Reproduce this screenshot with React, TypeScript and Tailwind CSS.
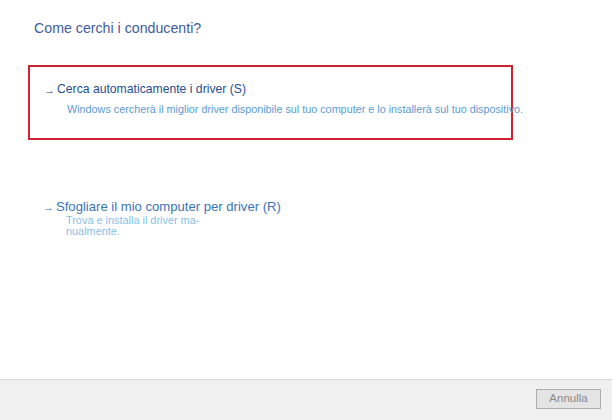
import React from "react";

const font = { fontFamily: '"Liberation Sans", Arial, sans-serif' };

function Option({
	title,
	desc,
	titleClass,
	descClass,
	arrowColor,
}: {
	title: string;
	desc: React.ReactNode;
	titleClass: string;
	descClass: string;
	arrowColor: string;
}) {
	return (
		<div className="flex flex-col">
			<div className="flex items-end">
				<span className={`w-[13px] text-[11px] leading-[13px] ${arrowColor}`}>→</span>
				<span className={`leading-[15px] ${titleClass}`}>{title}</span>
			</div>
			<div className={`pl-[23px] whitespace-nowrap ${descClass}`}>{desc}</div>
		</div>
	);
}

export default function App() {
	return (
		<div className="w-[612px] h-[420px] flex flex-col bg-white" style={font}>
			<div className="flex-1 flex flex-col">
				<div className="pt-[20px] pl-[34px] text-[14.2px] leading-[16px] text-[#3f5c9e]">
					Come cerchi i conducenti?
				</div>
				<div className="mt-[29px] ml-[28px] w-[485px] h-[75px] border-2 border-[#cc2430] pt-[15px] pl-[14px]">
					<Option
						title="Cerca automaticamente i driver (S)"
						desc="Windows cercherà il miglior driver disponibile sul tuo computer e lo installerà sul tuo dispositivo."
						titleClass="text-[12.2px] text-[#1f4f8f]"
						descClass="mt-[7px] text-[10.8px] leading-[10px] text-[#5b9bd1]"
						arrowColor="text-[#1f4f8f]"
					/>
				</div>
				<div className="mt-[59px] pl-[43px]">
					<Option
						title="Sfogliare il mio computer per driver (R)"
						desc={
							<>
								Trova e installa il driver ma-
								<br />
								nualmente.
							</>
						}
						titleClass="text-[13.1px] text-[#3a74b6]"
						descClass="mt-[1px] text-[10.9px] leading-[11px] text-[#86c1ea]"
						arrowColor="text-[#3a74b6]"
					/>
				</div>
			</div>
			<div className="h-[41px] border-t border-[#d8d8d8] bg-[#f0f0f0] flex items-start justify-end pr-[11px] pt-[9px]">
				<button className="w-[65px] h-[20px] border border-[#adadad] bg-[#e4e4e4] text-[11.5px] text-[#8a8a8a] leading-none">
					Annulla
				</button>
			</div>
		</div>
	);
}
